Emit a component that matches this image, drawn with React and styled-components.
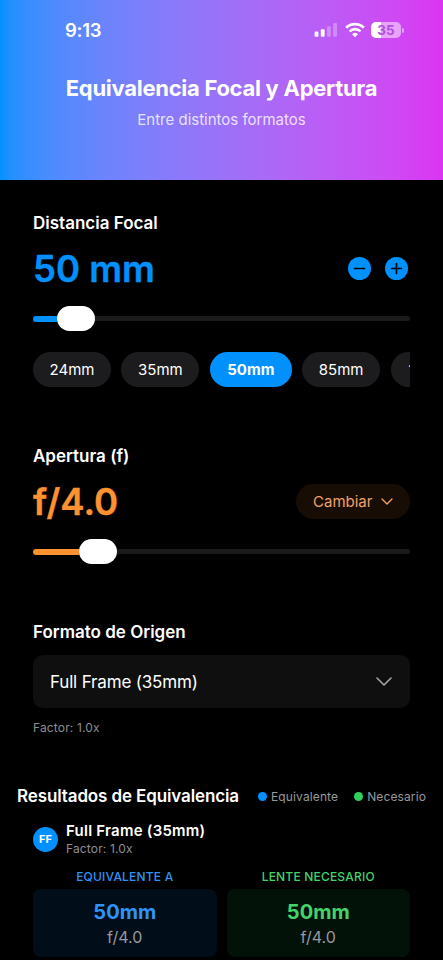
import React, { useState } from "react";
import styled, { createGlobalStyle } from "styled-components";

const BLUE = "#0091ff";
const ORANGE = "#ff9230";
const GREEN = "#30d158";

const focals = ["24mm", "35mm", "50mm", "85mm", "105mm"];

const results = [
  { label: "EQUIVALENTE A", focal: "50mm", stop: "f/4.0", color: "#2f93f5", bg: "#010d18" },
  { label: "LENTE NECESARIO", focal: "50mm", stop: "f/4.0", color: "#45d368", bg: "#031208" },
];

function StatusBar() {
  return (
    <Status>
      <Time>9:13</Time>
      <StatusIcons>
        <svg width="24" height="16" viewBox="0 0 24 16" fill="#fff">
          <rect x="0.6" y="9.6" width="3.8" height="5.2" rx="1.1" />
          <rect x="6.8" y="7.2" width="3.8" height="7.6" rx="1.1" />
          <rect x="13" y="4.2" width="3.8" height="10.6" rx="1.1" opacity="0.3" />
          <rect x="19.2" y="1" width="3.8" height="13.8" rx="1.1" opacity="0.3" />
        </svg>
        <svg width="20" height="16" viewBox="0 0 20 16" fill="none" stroke="#fff" strokeWidth="2.6">
          <path d="M1.2 5.7a12.6 12.6 0 0 1 17.6 0" />
          <path d="M4.5 9.4a7.9 7.9 0 0 1 11 0" />
          <path d="M10 15.2l-2.9-3a4.2 4.2 0 0 1 5.8 0z" fill="#fff" stroke="none" />
        </svg>
        <Battery>
          <BatteryBody>35</BatteryBody>
          <BatteryTip />
        </Battery>
      </StatusIcons>
    </Status>
  );
}

function Chevron({ width, height, color, stroke }) {
  return (
    <svg width={width} height={height} viewBox={`0 0 ${width} ${height}`} fill="none">
      <path
        d={`M1 1L${width / 2} ${height - 1}L${width - 1} 1`}
        stroke={color}
        strokeWidth={stroke}
        strokeLinecap="round"
        strokeLinejoin="round"
      />
    </svg>
  );
}

function Slider({ value, color }) {
  return (
    <SliderBox>
      <Fill $color={color} style={{ width: `${value}px` }} />
      <Thumb />
      <Rest />
    </SliderBox>
  );
}

function App() {
  const [focal, setFocal] = useState("50mm");

  return (
    <Page>
      <GlobalStyle />
      <Header>
        <StatusBar />
        <Title>Equivalencia Focal y Apertura</Title>
        <Subtitle>Entre distintos formatos</Subtitle>
      </Header>

      <Section>
        <SectionLabel>Distancia Focal</SectionLabel>
        <ValueRow>
          <Value $color={BLUE}>{parseInt(focal)} mm</Value>
          <Steps>
            <StepButton aria-label="menos">
              <svg width="23" height="23" viewBox="0 0 23 23" stroke="#000" strokeWidth="1.7" strokeLinecap="round">
                <path d="M6.6 11.5h9.8" />
              </svg>
            </StepButton>
            <StepButton aria-label="más">
              <svg width="23" height="23" viewBox="0 0 23 23" stroke="#000" strokeWidth="1.7" strokeLinecap="round">
                <path d="M6.6 11.5h9.8M11.5 6.6v9.8" />
              </svg>
            </StepButton>
          </Steps>
        </ValueRow>
        <Slider value={24} color={BLUE} />
        <Chips>
          {focals.map((f) => (
            <Chip key={f} $active={f === focal} $wide={f.length > 4} onClick={() => setFocal(f)}>
              {f}
            </Chip>
          ))}
        </Chips>
      </Section>

      <Section $top="58px">
        <SectionLabel>Apertura (f)</SectionLabel>
        <ValueRow>
          <Value $color={ORANGE}>f/4.0</Value>
          <ChangeButton>
            Cambiar
            <Chevron width={12} height={7} color="#f0a065" stroke={1.4} />
          </ChangeButton>
        </ValueRow>
        <Slider value={46} color={ORANGE} />
      </Section>

      <Section $top="57px">
        <SectionLabel>Formato de Origen</SectionLabel>
        <Select>
          Full Frame (35mm)
          <Chevron width={16} height={9} color="#a5a5a8" stroke={1.6} />
        </Select>
        <Factor>Factor: 1.0x</Factor>
      </Section>

      <ResultsHeader>
        <ResultsTitle>Resultados de Equivalencia</ResultsTitle>
        <Legend>
          <LegendItem>
            <Dot $color={BLUE} />
            Equivalente
          </LegendItem>
          <LegendItem>
            <Dot $color={GREEN} />
            Necesario
          </LegendItem>
        </Legend>
      </ResultsHeader>

      <Section $top="14px">
        <Format>
          <Badge>FF</Badge>
          <div>
            <FormatName>Full Frame (35mm)</FormatName>
            <FormatFactor>Factor: 1.0x</FormatFactor>
          </div>
        </Format>
        <Results>
          {results.map((r) => (
            <div key={r.label}>
              <ResultLabel $color={r.color}>{r.label}</ResultLabel>
              <ResultCard $bg={r.bg}>
                <ResultFocal $color={r.color}>{r.focal}</ResultFocal>
                <ResultStop>{r.stop}</ResultStop>
              </ResultCard>
            </div>
          ))}
        </Results>
      </Section>
    </Page>
  );
}

const GlobalStyle = createGlobalStyle`
  * {
    box-sizing: border-box;
  }

  body {
    margin: 0;
    background: #000;
    overflow: hidden;
  }

  button {
    font-family: inherit;
    border: 0;
    padding: 0;
    cursor: pointer;
  }

  svg {
    display: block;
    flex: none;
  }
`;

const Page = styled("div")`
  width: 443px;
  height: 960px;
  overflow: hidden;
  background: #000;
  color: #fff;
  font-family: Inter, "Liberation Sans", sans-serif;
  white-space: nowrap;
`;

const Header = styled("header")`
  height: 180px;
  background: linear-gradient(to right in oklab, #0091ff, #db34f2);
  text-align: center;
`;

const Status = styled("div")`
  display: flex;
  justify-content: space-between;
  align-items: center;
  height: 60px;
  padding: 0 39px 0 65px;
`;

const Time = styled("span")`
  font-size: 18.5px;
  font-weight: 600;
  letter-spacing: -0.3px;
`;

const StatusIcons = styled("div")`
  display: flex;
  align-items: center;
  gap: 6.5px;
`;

const Battery = styled("div")`
  display: flex;
  align-items: center;
  gap: 1px;
`;

const BatteryBody = styled("span")`
  width: 30px;
  height: 16px;
  border-radius: 5px;
  background: linear-gradient(to right, #fff 35%, rgba(255, 255, 255, 0.5) 35%);
  color: #b24fe0;
  font-size: 13.5px;
  font-weight: 700;
  line-height: 16px;
`;

const BatteryTip = styled("span")`
  width: 2px;
  height: 5px;
  border-radius: 0 2px 2px 0;
  background: rgba(255, 255, 255, 0.5);
`;

const Title = styled("h1")`
  margin: 14px 0 0;
  font-size: 22px;
  font-weight: 700;
  line-height: 28px;
  letter-spacing: -0.28px;
`;

const Subtitle = styled("p")`
  margin: 8px 0 0;
  font-size: 15px;
  line-height: 20px;
  color: rgba(255, 255, 255, 0.8);
`;

const Section = styled("section")`
  padding: ${({ $top = "32px" }) => $top} 33px 0;
`;

const SectionLabel = styled("h2")`
  margin: 0;
  font-size: 17px;
  font-weight: 600;
  line-height: 22px;
`;

const ValueRow = styled("div")`
  display: flex;
  justify-content: space-between;
  align-items: center;
  height: 43px;
  margin-top: 13px;
`;

const Value = styled("span")`
  font-size: 36.5px;
  font-weight: 600;
  line-height: 44px;
  color: ${({ $color }) => $color};
  -webkit-text-stroke: 0.4px ${({ $color }) => $color};
`;

const Steps = styled("div")`
  display: flex;
  gap: 14px;
  padding-right: 2px;
`;

const StepButton = styled("button")`
  width: 23px;
  height: 23px;
  border-radius: 50%;
  background: ${BLUE};
`;

const SliderBox = styled("div")`
  display: flex;
  align-items: center;
  height: 25px;
  margin-top: 16px;
`;

const Fill = styled("div")`
  height: 6px;
  border-radius: 3px 0 0 3px;
  background: ${({ $color }) => $color};
`;

const Thumb = styled("div")`
  width: 38px;
  height: 25px;
  border-radius: 12.5px;
  background: #fff;
`;

const Rest = styled("div")`
  flex: 1;
  height: 5px;
  border-radius: 0 3px 3px 0;
  background: #1a1a1a;
`;

const Chips = styled("div")`
  display: flex;
  gap: 10.4px;
  margin-top: 21px;
  overflow: hidden;
`;

const Chip = styled("button")`
  flex: none;
  width: ${({ $active, $wide }) => ($wide ? "87px" : $active ? "82px" : "78px")};
  height: 35px;
  border-radius: 18px;
  background: ${({ $active }) => ($active ? BLUE : "#1c1c1e")};
  color: #fff;
  font-size: 15px;
  font-weight: ${({ $active }) => ($active ? 700 : 400)};
`;

const ChangeButton = styled("button")`
  display: flex;
  justify-content: space-between;
  align-items: center;
  width: 114px;
  height: 35px;
  padding: 0 17px;
  border-radius: 18px;
  background: #170d04;
  color: #f0a065;
  font-size: 15px;
`;

const Select = styled("div")`
  display: flex;
  justify-content: space-between;
  align-items: center;
  height: 53px;
  margin-top: 12px;
  padding: 0 18px 0 17px;
  border-radius: 10px;
  background: #0f0f0f;
  font-size: 17px;
  letter-spacing: -0.17px;
`;

const Factor = styled("p")`
  margin: 12px 0 0;
  font-size: 12px;
  line-height: 16px;
  letter-spacing: 0.15px;
  color: #8e8e93;
`;

const ResultsHeader = styled("div")`
  display: flex;
  justify-content: space-between;
  align-items: center;
  margin-top: 49px;
  padding: 0 17px;
`;

const ResultsTitle = styled("h2")`
  margin: 0;
  font-size: 17px;
  font-weight: 600;
  line-height: 22px;
  letter-spacing: -0.12px;
`;

const Legend = styled("div")`
  display: flex;
  gap: 16px;
`;

const LegendItem = styled("span")`
  display: flex;
  align-items: center;
  gap: 4px;
  font-size: 12px;
  letter-spacing: 0.12px;
  color: #98989d;
`;

const Dot = styled("i")`
  width: 9px;
  height: 9px;
  border-radius: 50%;
  background: ${({ $color }) => $color};
`;

const Format = styled("div")`
  display: flex;
  align-items: center;
  gap: 8px;
`;

const Badge = styled("span")`
  width: 25px;
  height: 25px;
  border-radius: 50%;
  background: ${BLUE};
  font-size: 11px;
  font-weight: 700;
  line-height: 25px;
  text-align: center;
`;

const FormatName = styled("div")`
  font-size: 15px;
  font-weight: 600;
  line-height: 19px;
  letter-spacing: 0.24px;
`;

const FormatFactor = styled("div")`
  font-size: 12px;
  line-height: 18px;
  letter-spacing: 0.15px;
  color: #8e8e93;
`;

const Results = styled("div")`
  display: grid;
  grid-template-columns: 1fr 1fr;
  gap: 10px;
  margin-top: 11px;
  text-align: center;
`;

const ResultLabel = styled("div")`
  font-size: 12px;
  font-weight: 500;
  line-height: 16px;
  letter-spacing: 0.2px;
  color: ${({ $color }) => $color};
`;

const ResultCard = styled("div")`
  height: 68px;
  margin-top: 4px;
  padding-top: 10px;
  border-radius: 8px;
  background: ${({ $bg }) => $bg};
`;

const ResultFocal = styled("div")`
  font-size: 20px;
  font-weight: 700;
  line-height: 26px;
  color: ${({ $color }) => $color};
`;

const ResultStop = styled("div")`
  font-size: 16px;
  line-height: 24px;
  color: #98989d;
`;

export default App;
